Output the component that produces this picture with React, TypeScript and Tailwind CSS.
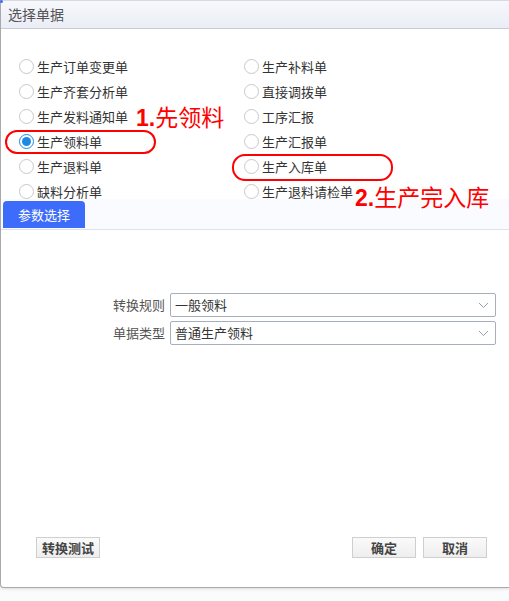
import React from "react";

const left = ["生产订单变更单", "生产齐套分析单", "生产发料通知单", "生产领料单", "生产退料单", "缺料分析单"];
const right = ["生产补料单", "直接调拨单", "工序汇报", "生产汇报单", "生产入库单", "生产退料请检单"];

function Radio({ label, checked }: { label: string; checked?: boolean }) {
  return (
    <div className="flex items-center h-[25px]">
      {checked ? (
        <span className="w-[15px] h-[15px] rounded-full border border-[#1e88e5] bg-white flex items-center justify-center shrink-0">
          <span className="w-[9px] h-[9px] rounded-full bg-[#1e88e5]" />
        </span>
      ) : (
        <span className="w-[15px] h-[15px] rounded-full border border-[#c9c9c9] bg-white shrink-0" />
      )}
      <span className="ml-[3px] text-[13px] text-[#333] leading-none">{label}</span>
    </div>
  );
}

function Select({ label, value }: { label: string; value: string }) {
  return (
    <div className="flex items-center h-[24px]">
      <div className="w-[164px] text-right text-[13px] text-[#555]">{label}</div>
      <div className="ml-[5px] w-[326px] h-[24px] border border-[#a7afbd] rounded-[2px] bg-white flex items-center justify-between pl-[4px] pr-[6px]">
        <span className="text-[13px] text-[#333]">{value}</span>
        <svg width="11" height="7" viewBox="0 0 11 7">
          <polyline points="1,1 5.5,5.5 10,1" fill="none" stroke="#9aa0aa" strokeWidth="1" />
        </svg>
      </div>
    </div>
  );
}

function Btn({ children, className = "" }: { children: React.ReactNode; className?: string }) {
  return (
    <div
      className={
        "w-[64px] h-[21px] border border-[#cfcfcf] bg-gradient-to-b from-[#fafafa] to-[#eeeeee] flex items-center justify-center text-[13px] font-bold text-[#444] " +
        className
      }
    >
      {children}
    </div>
  );
}

export default function App() {
  return (
    <div
      className="w-[509px] h-[601px] bg-gradient-to-b from-[#f3f4f6] to-[#fafbfc] relative overflow-hidden"
      style={{ fontFamily: '"Noto Sans CJK SC", "Noto Sans", sans-serif' }}
    >
      <div className="w-[509px] h-[588px] bg-white border-l border-b border-[#a9a9a9] rounded-bl-[4px] shadow-[0_1px_3px_rgba(0,0,0,0.12)] flex flex-col">
        <div className="h-[29px] shrink-0 border-t border-[#d6d9e0] border-b border-b-[#c9ccd3] bg-gradient-to-b from-[#f7f8fc] to-[#eaedf5] flex items-center pl-[7px] relative">
          <span className="absolute left-[-1px] top-[-1px] w-[3px] h-[3px] bg-[#3d6cfb] rounded-full" />
          <span className="text-[14px] text-[#555]">选择单据</span>
        </div>
        <div className="h-[170px] shrink-0 overflow-hidden pt-[25px] pl-[18px] grid grid-cols-[225px_1fr]">
          <div className="flex flex-col">
            {left.map((l) => (
              <Radio key={l} label={l} checked={l === "生产领料单"} />
            ))}
          </div>
          <div className="flex flex-col">
            {right.map((l) => (
              <Radio key={l} label={l} />
            ))}
          </div>
        </div>
        <div className="h-[31px] shrink-0 bg-[#f9fbff] border-b border-[#dde3ee] pt-[2px] pl-[2px]">
          <div className="w-[82px] h-[27px] rounded-t-[4px] bg-[#3d6cfb] text-white text-[13px] flex items-center justify-center">
            参数选择
          </div>
        </div>
        <div className="pt-[63px] flex flex-col gap-[4px]">
          <Select label="转换规则" value="一般领料" />
          <Select label="单据类型" value="普通生产领料" />
        </div>
        <div className="flex-1" />
        <div className="flex items-center pl-[35px] pr-[22px] mb-[29px]">
          <Btn>转换测试</Btn>
          <div className="flex-1" />
          <Btn>确定</Btn>
          <Btn className="ml-[7px]">取消</Btn>
        </div>
      </div>

      <div className="absolute left-[5px] top-[130px] w-[151px] h-[24px] border-2 border-[#f00] rounded-[12px]" />
      <div className="absolute left-[232px] top-[154px] w-[161px] h-[27px] border-2 border-[#f00] rounded-[13px]" />
      <div className="absolute left-[136px] top-[101px] text-[23px] leading-[30px] text-[#f00] whitespace-nowrap">
        <span className="font-bold" style={{ fontFamily: '"Liberation Sans", sans-serif' }}>1.</span>先领料
      </div>
      <div className="absolute left-[355px] top-[181px] text-[23px] leading-[30px] text-[#f00] whitespace-nowrap">
        <span className="font-bold" style={{ fontFamily: '"Liberation Sans", sans-serif' }}>2.</span>生产完入库
      </div>
    </div>
  );
}
